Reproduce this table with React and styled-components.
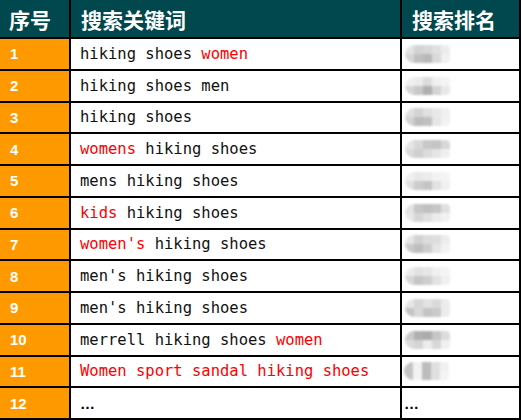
import React from "react";
import styled, { createGlobalStyle } from "styled-components";

const GlobalStyle = createGlobalStyle`
  html, body {
    margin: 0;
    padding: 0;
    background: #fff;
  }
`;

const Sheet = styled.div`
  width: 521px;
  height: 420px;
  box-sizing: border-box;
  padding: 0 2px 2px 0;
  background: #000;
  display: grid;
  grid-template-columns: 69px 329px 117px;
  grid-template-rows: 37px repeat(12, 1fr);
  gap: 2px;
`;

const HeadCell = styled.div`
  background: #01474e;
  color: #fff;
  font-family: "Noto Sans CJK SC", "Noto Sans", sans-serif;
  font-weight: 700;
  font-size: 21px;
  display: flex;
  align-items: center;
  padding-left: ${(p) => p.$pad || 10}px;
`;

const NumCell = styled.div`
  background: #ff9900;
  color: #fff;
  font-family: "Liberation Sans", Arial, sans-serif;
  font-weight: 700;
  font-size: 15px;
  display: flex;
  align-items: center;
  padding-left: 10px;
`;

const KeyCell = styled.div`
  background: #fff;
  color: #111;
  font-family: "DejaVu Sans Mono", "Liberation Mono", monospace;
  font-size: 15.5px;
  display: flex;
  align-items: center;
  padding-left: 9px;
  white-space: pre;
`;

const Red = styled.span`
  color: #ff0000;
`;

const RankCell = styled.div`
  background: #fff;
  display: flex;
  align-items: center;
  overflow: hidden;
`;

const Blob = styled.div`
  display: grid;
  grid-template-columns: repeat(${(p) => p.$cols}, 9px);
  grid-auto-rows: 9px;
  filter: blur(0.8px);
  border-radius: 9px 4px 4px 9px;
  overflow: hidden;
  margin-left: ${(p) => p.$shift || 0}px;
`;

const Px = styled.div`
  background: ${(p) => p.$c};
`;

const Dots = styled.span`
  font-family: "Liberation Sans", Arial, sans-serif;
  font-weight: 700;
  font-size: 15px;
  color: #000;
  letter-spacing: 0.5px;
  padding-left: ${(p) => p.$pad || 0}px;
`;

const rows = [
  { n: 1, k: [["hiking shoes "], ["women", 1]], b: ["#e4e4e4", "#d4d4d4", "#d8d8d8", "#e0e0e0", "#ececec", "#d6d6d6", "#c0c0c0", "#b8b8b8", "#dadada", "#f0f0f0"] },
  { n: 2, k: [["hiking shoes men"]], b: ["#f0f0f0", "#ececec", "#dcdcdc", "#f0f0f0", "#f4f4f4", "#d6d6d6", "#c8c8c8", "#b0b0b0", "#d4d4d4", "#e8e8e8"] },
  { n: 3, k: [["hiking shoes"]], b: ["#e0e0e0", "#d4d4d4", "#e0e0e0", "#e8e8e8", "#f0f0f0", "#d2d2d2", "#bcbcbc", "#c0c0c0", "#e6e6e6", "#f2f2f2"] },
  { n: 4, k: [["womens", 1], [" hiking shoes"]], b: ["#e6e6e6", "#d8d8d8", "#c8c8c8", "#c4c4c4", "#d8d8d8", "#dadada", "#d0d0d0", "#dcdcdc", "#e6e6e6", "#f0f0f0"] },
  { n: 5, k: [["mens hiking shoes"]], b: ["#f0f0f0", "#e8e8e8", "#ececec", "#f2f2f2", "#f4f4f4", "#e0e0e0", "#cccccc", "#c4c4c4", "#e2e2e2", "#f0f0f0"] },
  { n: 6, k: [["kids", 1], [" hiking shoes"]], b: ["#e2e2e2", "#c6c6c6", "#c0c0c0", "#c6c6c6", "#e0e0e0", "#e8e8e8", "#d6d6d6", "#e0e0e0", "#ececec", "#f2f2f2"] },
  { n: 7, k: [["women's", 1], [" hiking shoes"]], b: ["#e6e6e6", "#d2d2d2", "#dcdcdc", "#dedede", "#ececec", "#cacaca", "#bebebe", "#cdcdcd", "#e6e6e6", "#f2f2f2"] },
  { n: 8, k: [["men's hiking shoes"]], b: ["#ececec", "#e2e2e2", "#e6e6e6", "#f0f0f0", "#f4f4f4", "#d6d6d6", "#c6c6c6", "#cecece", "#e2e2e2", "#f0f0f0"] },
  { n: 9, k: [["men's hiking shoes"]], b: ["#e6e6e6", "#d6d6d6", "#e2e2e2", "#dadada", "#ececec", "#c4c4c4", "#d8d8d8", "#c4c4c4", "#cacaca", "#ececec"] },
  { n: 10, k: [["merrell hiking shoes "], ["women", 1]], b: ["#cacaca", "#b0b0b0", "#acacac", "#c6c6c6", "#dcdcdc", "#dcdcdc", "#d4d4d4", "#ececec", "#d8d8d8", "#f0f0f0"] },
  { n: 11, k: [["Women sport sandal hiking shoes", 1]], b: ["#c4c4c4", "#f2f2f2", "#bcbcbc", "#e0e0e0", "#f0f0f0", "#c4c4c4", "#f2f2f2", "#bcbcbc", "#e0e0e0", "#f4f4f4"], wide: true },
];

export default function App() {
  return (
    <>
      <GlobalStyle />
      <Sheet>
        <HeadCell $pad={9}>序号</HeadCell>
        <HeadCell $pad={10}>搜索关键词</HeadCell>
        <HeadCell $pad={10}>搜索排名</HeadCell>
        {rows.map((r) => (
          <React.Fragment key={r.n}>
            <NumCell>{r.n}</NumCell>
            <KeyCell>
              {r.k.map(([t, red], i) => (red ? <Red key={i}>{t}</Red> : <span key={i}>{t}</span>))}
            </KeyCell>
            <RankCell>
              <Blob $cols={r.b.length / 2} $shift={r.wide ? 2 : 3}>
                {r.b.map((c, i) => (
                  <Px key={i} $c={c} />
                ))}
              </Blob>
            </RankCell>
          </React.Fragment>
        ))}
        <NumCell>12</NumCell>
        <KeyCell>
          <Dots>…</Dots>
        </KeyCell>
        <RankCell>
          <Dots $pad={2}>…</Dots>
        </RankCell>
      </Sheet>
    </>
  );
}
